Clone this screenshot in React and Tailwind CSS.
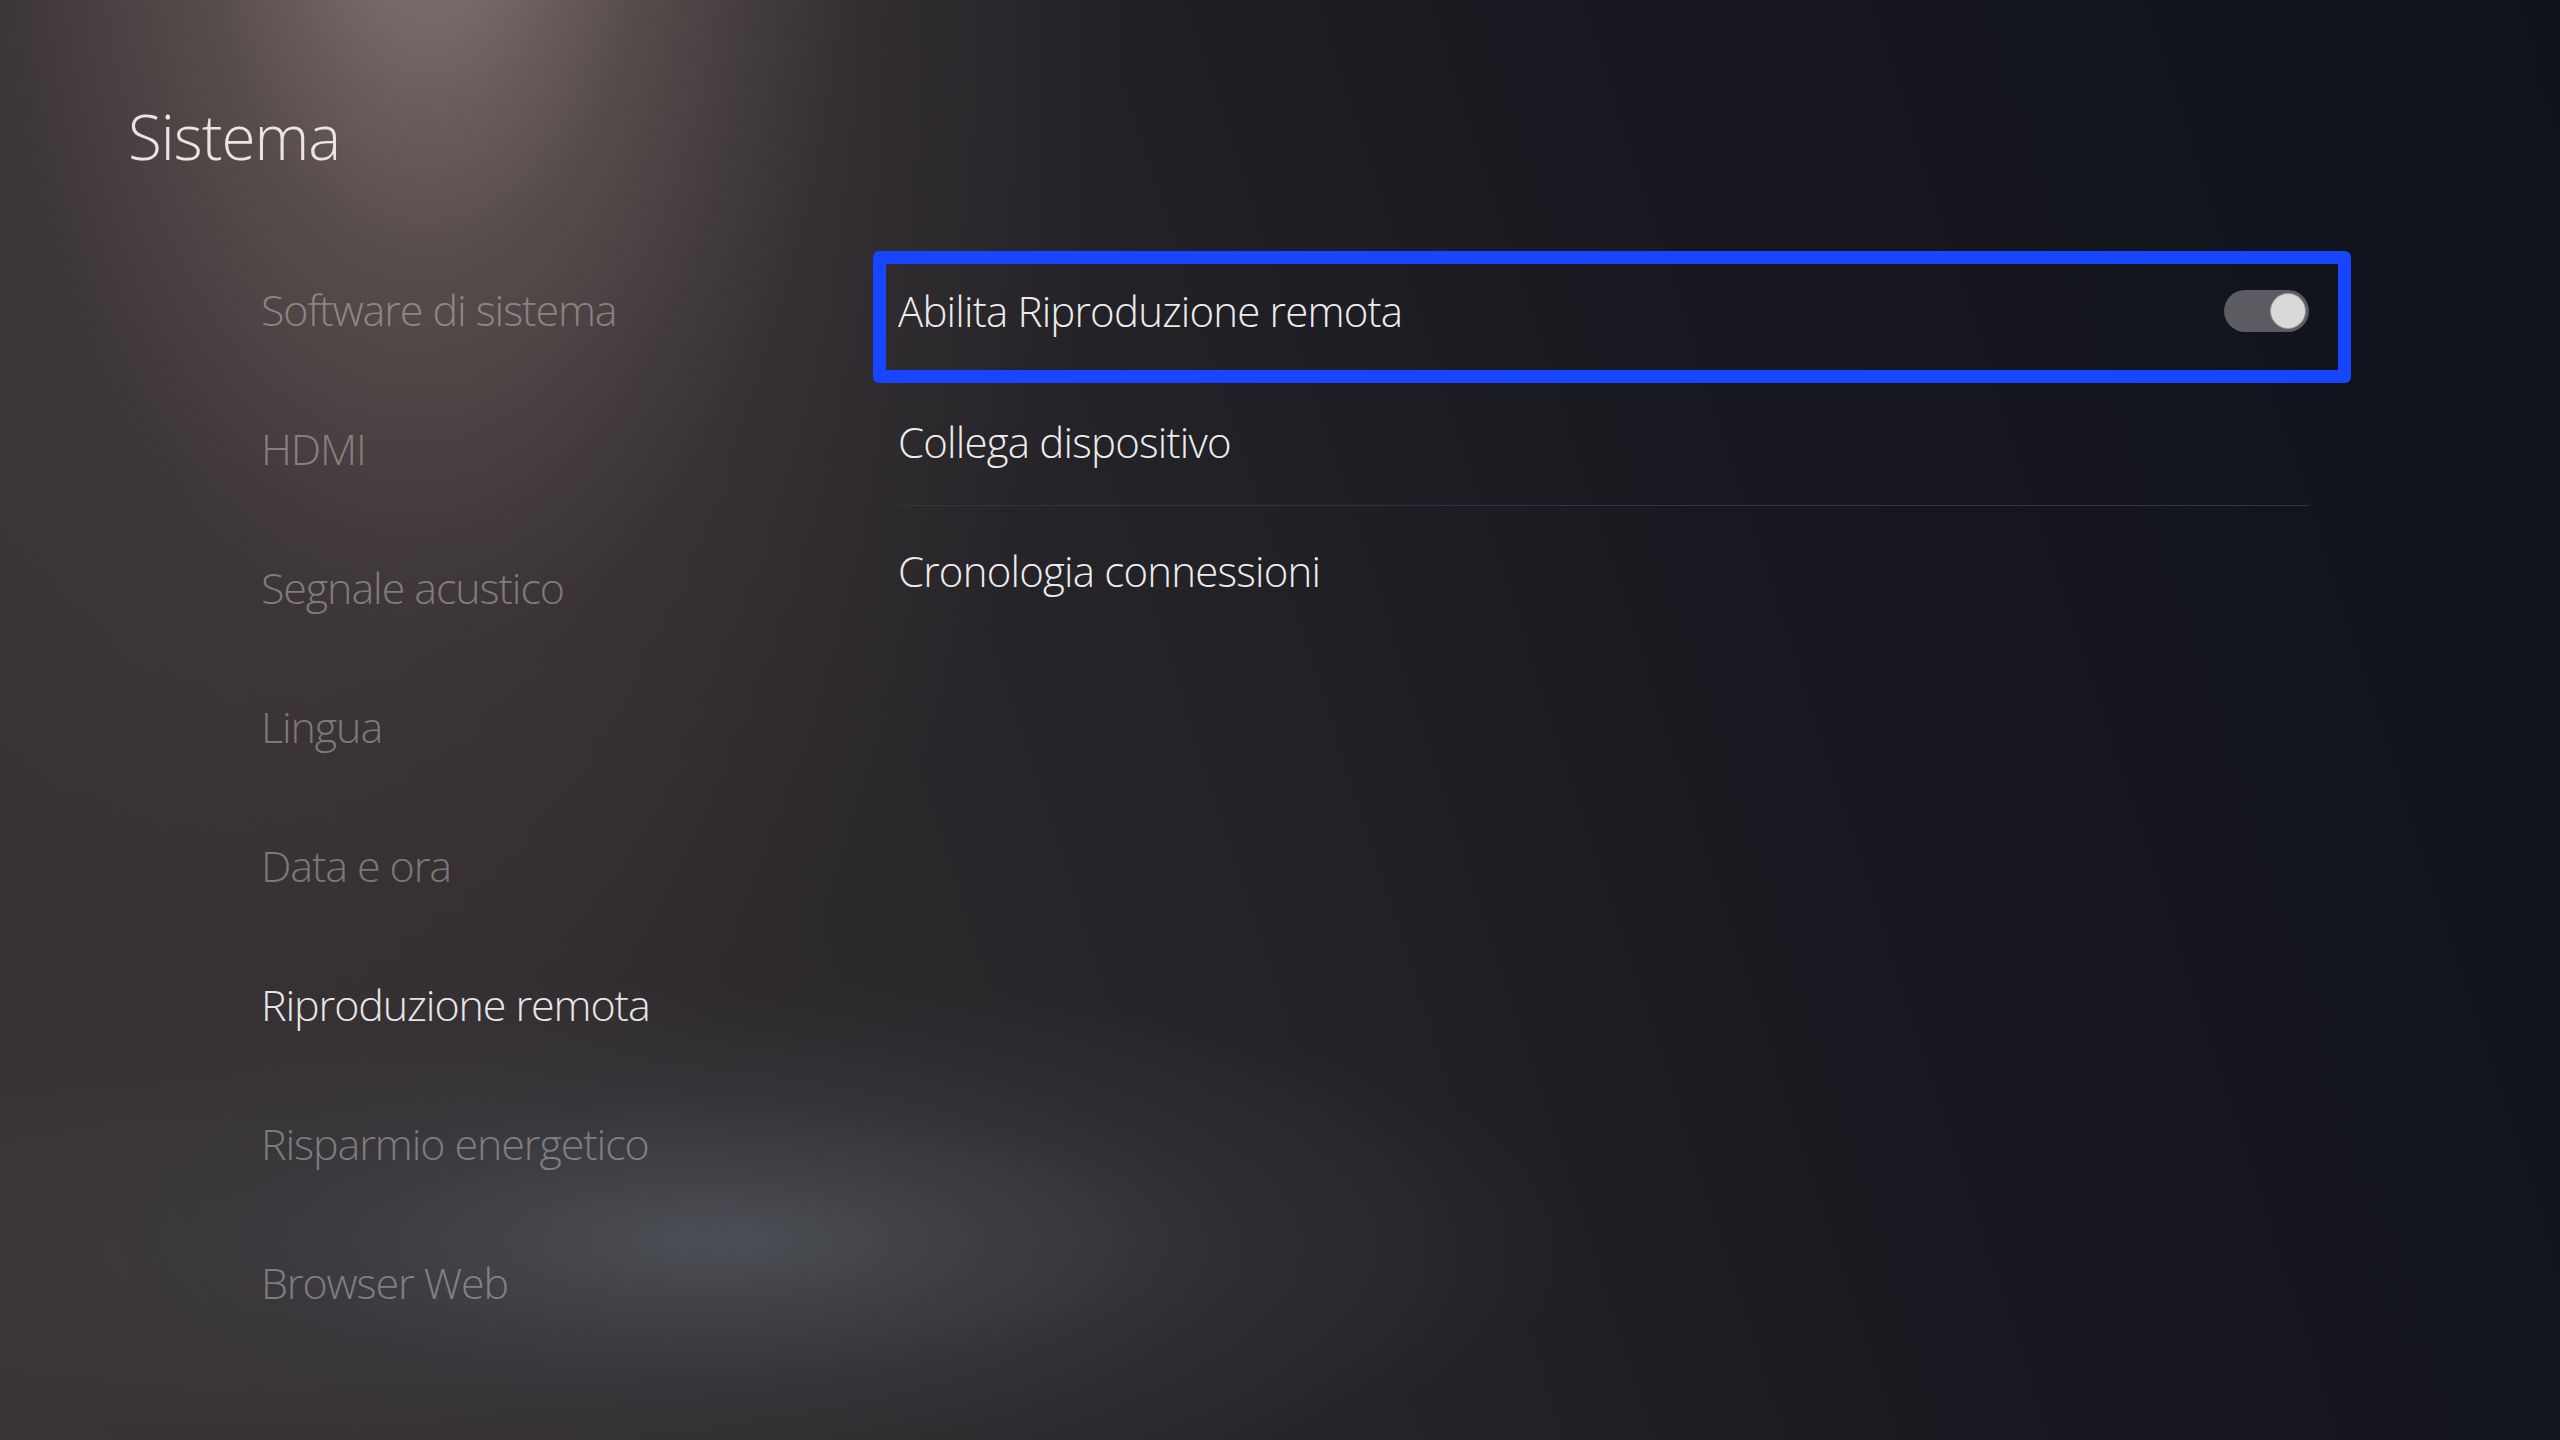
import { useState } from 'react';

const MENU = [
  'Software di sistema',
  'HDMI',
  'Segnale acustico',
  'Lingua',
  'Data e ora',
  'Riproduzione remota',
  'Risparmio energetico',
  'Browser Web',
];

const BG =
  "bg-[image:radial-gradient(ellipse_700px_1300px_at_430px_-160px,rgba(150,133,128,0.9)_0%,rgba(115,100,97,0.58)_33%,rgba(85,74,74,0.28)_62%,transparent_100%),radial-gradient(ellipse_860px_260px_at_720px_1240px,rgba(84,90,97,0.75)_0%,rgba(70,74,80,0.3)_55%,transparent_100%),linear-gradient(72deg,#3a3437_0%,#2e2a2d_28%,#232227_48%,#17181f_68%,#0f111b_100%)]";

const Toggle = ({ on, onClick }) => (
  <button
    type="button"
    onClick={onClick}
    className={`w-[85px] h-[42px] rounded-full bg-[#5b5c61] flex items-center px-[3px] ${on ? 'justify-end' : 'justify-start'}`}
  >
    <span className="w-[36px] h-[36px] rounded-full bg-[#d9d9d9] border border-[#9a9a9e]" />
  </button>
);

const ROW_TEXT = "text-[42px] leading-none tracking-[-0.8px] text-[#ececec]";

const App = () => {
  const [active, setActive] = useState(5);
  const [enabled, setEnabled] = useState(true);

  return (
    <div className={`w-[2560px] h-[1440px] overflow-hidden ${BG} font-['Open_Sans','Liberation_Sans',sans-serif] font-light`}>
      <h1 className="pl-[128px] pt-[105px] text-[62px] leading-none tracking-[-1px] text-[#e8e5e5] font-light">Sistema</h1>

      <div className="flex mt-[40px]">
        {/* left menu */}
        <div className="w-[873px] pl-[261px] pt-[33px] flex flex-col">
          {MENU.map((m, i) => (
            <button
              key={m}
              type="button"
              onClick={() => setActive(i)}
              className={`h-[139px] flex items-center text-left text-[43px] leading-none tracking-[-1.1px] font-light ${i === active ? 'text-[#e6e6e6]' : 'text-white/35'}`}
            >
              {m}
            </button>
          ))}
        </div>

        {/* right options */}
        <div className="w-[1478px] flex flex-col pt-[44px]">
          <div className="h-[132px] border-[13px] border-[#1846ff] rounded-[6px] flex items-center justify-between pl-[12px] pr-[29px] pb-[12px]">
            <span className={ROW_TEXT}>Abilita Riproduzione remota</span>
            <Toggle on={enabled} onClick={() => setEnabled(!enabled)} />
          </div>
          <div className="h-[123px] ml-[25px] mr-[42px] flex items-center border-b border-[#34343c] pb-[5px]">
            <span className={ROW_TEXT}>Collega dispositivo</span>
          </div>
          <div className="h-[130px] ml-[25px] flex items-center">
            <span className={ROW_TEXT}>Cronologia connessioni</span>
          </div>
        </div>
      </div>
    </div>
  );
};

export default App;
